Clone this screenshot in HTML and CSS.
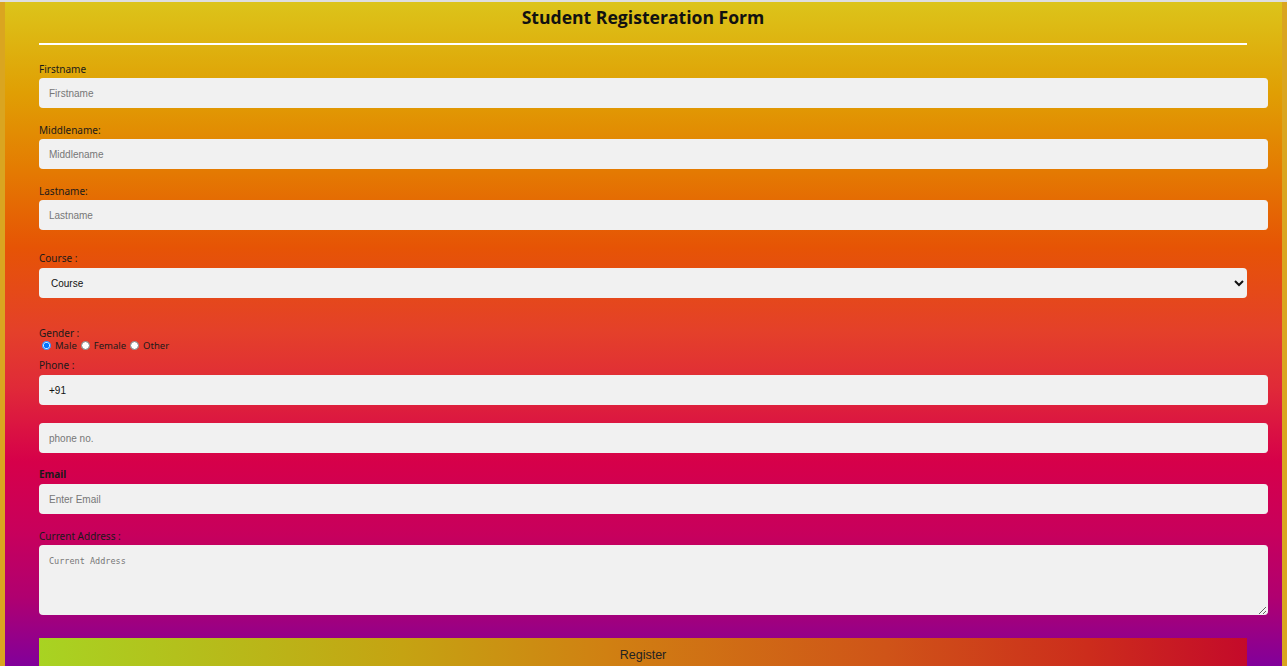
FILE: index.html
```html
<!DOCTYPE html>
<html>
<head>
<meta charset="utf-8">
<link rel="stylesheet" href="styles.css">
</head>
<body>
<form class="card">
  <h1 class="title">Student Registeration Form</h1>
  <div class="rule"></div>

  <label class="lbl first">Firstname</label>
  <input class="field" type="text" placeholder="Firstname">

  <label class="lbl">Middlename:</label>
  <input class="field" type="text" placeholder="Middlename">

  <label class="lbl">Lastname:</label>
  <input class="field" type="text" placeholder="Lastname">

  <label class="lbl course-lbl">Course :</label>
  <select class="select">
    <option>Course</option>
    <option>BCA</option>
    <option>BBA</option>
  </select>

  <label class="lbl gender-lbl">Gender :</label>
  <div class="radios">
    <input class="radio" type="radio" name="g" checked><span>Male</span>
    <input class="radio" type="radio" name="g"><span>Female</span>
    <input class="radio" type="radio" name="g"><span>Other</span>
  </div>

  <label class="lbl phone-lbl">Phone :</label>
  <input class="field code" type="text" value="+91">
  <input class="field phone2" type="text" placeholder="phone no.">

  <label class="lbl bold">Email</label>
  <input class="field" type="text" placeholder="Enter Email">

  <label class="lbl">Current Address :</label>
  <textarea class="area" placeholder="Current Address"></textarea>

  <button class="btn" type="button">Register</button>
</form>
</body>
</html>
```
FILE: styles.css
```css
html {
  background: #dedede;
}
body {
  margin: 2px 0 0 0;
  padding: 0 5px;
  background: #daa520;
  min-height: 700px;
}
.card {
  display: flex;
  flex-direction: column;
  align-items: flex-start;
  padding: 2px 35px 40px 34px;
  min-height: 660px;
  background: linear-gradient(180deg,
    #dcc41a 0px,
    #e09f04 90px,
    #e47a02 170px,
    #e65405 245px,
    #e4402a 330px,
    #e02a38 385px,
    #d6004a 460px,
    #c8005c 530px,
    #b00070 595px,
    #80009c 666px);
  font-family: "Noto Sans", "Open Sans", sans-serif;
}
.title {
  align-self: stretch;
  margin: 0;
  text-align: center;
  font-family: "Open Sans", sans-serif;
  font-weight: 700;
  font-size: 17.6px;
  line-height: 26px;
  color: #111;
}
.rule {
  align-self: stretch;
  height: 2px;
  background: #fff;
  margin-top: 13px;
}
.lbl {
  display: block;
  font-size: 10px;
  line-height: 14px;
  color: #1a1a1a;
  margin-top: 15px;
  margin-bottom: 2px;
}
.lbl.first { margin-top: 17px; }
.lbl.course-lbl { margin-top: 21px; margin-bottom: 3px; }
.lbl.gender-lbl { margin-top: 28px; margin-bottom: -1px; }
.lbl.phone-lbl { margin-top: 7px; margin-bottom: 3px; }
.lbl.bold { font-weight: 700; margin-top: 14px; margin-bottom: 3px; }
.field {
  box-sizing: content-box;
  width: 100%;
  height: 30px;
  padding: 0 10px 0 10px;
  border: 0;
  border-radius: 4px;
  background: #f1f1f1;
  font-family: "Liberation Sans", Arial, sans-serif;
  font-size: 10px;
  color: #111;
  outline: none;
  margin-right: -1px;
  border-right: 1px solid #f1f1f1;
}
.field::placeholder { color: #777; }
.phone2 { margin-top: 18px; }
.select {
  align-self: stretch;
  height: 30px;
  padding: 0 8px;
  border: 0;
  border-radius: 4px;
  background-color: #f1f1f1;
  font-family: "Liberation Sans", Arial, sans-serif;
  font-size: 10px;
  color: #111;
}
.radios {
  display: flex;
  align-items: center;
  height: 12px;
  font-size: 9.5px;
  color: #1a1a1a;
}
.radio {
  width: 9px;
  height: 9px;
  margin: 0 4px 0 3px;
}
.radios span { margin-right: 1px; }
.area {
  box-sizing: content-box;
  width: 100%;
  height: 59px;
  padding: 11px 10px 0 10px;
  border: 0;
  border-right: 1px solid #f1f1f1;
  border-radius: 4px;
  background: #f1f1f1;
  font-family: "DejaVu Sans Mono", monospace;
  font-size: 8.5px;
  color: #111;
  outline: none;
  resize: both;
}
.area::placeholder { color: #777; }
.btn {
  align-self: stretch;
  margin-top: 23px;
  height: 33px;
  border: 0;
  background: linear-gradient(90deg,
    #a8d322 0%,
    #c5a312 30%,
    #d08012 47%,
    #cf5418 70%,
    #cc2c1c 87%,
    #c40a2a 100%);
  font-family: "Liberation Sans", Arial, sans-serif;
  font-size: 12.5px;
  color: #222;
}
```
